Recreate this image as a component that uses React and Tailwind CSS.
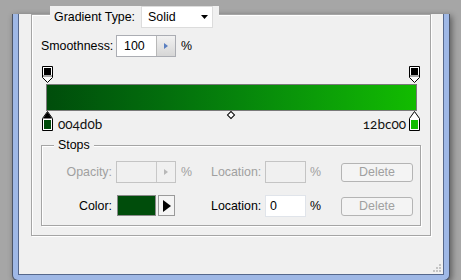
import React from 'react';

const font = "font-['Liberation_Sans',Arial,sans-serif]";

function TopStop() {
  return (
    <svg width="11" height="17" viewBox="0 0 11 17">
      <path d="M0.5 0.5H10.5V11.5L5.5 16.5L0.5 11.5Z" fill="#fff" stroke="#000" />
      <rect x="2" y="2" width="7" height="7" fill="#000" />
      <rect x="1" y="9" width="9" height="2" fill="#a8a8a8" />
    </svg>
  );
}

function BottomStop({ color, selected }) {
  return (
    <svg width="11" height="20" viewBox="0 0 11 20">
      <path d="M5.5 0.5L10.5 7.5V19.5H0.5V7.5Z" fill="#fff" stroke="#000" />
      {selected && <path d="M5.5 1L10 7.5H1Z" fill="#000" />}
      <rect x="2" y="9" width="7" height="9" fill={color} />
    </svg>
  );
}

function Spinner({ disabled }) {
  return (
    <div
      className={
        'w-[19px] h-full flex items-center justify-center border-l ' +
        (disabled
          ? 'border-[#c8c8c8] bg-[#f0f0f0]'
          : 'border-[#b8b8b8] bg-gradient-to-b from-[#f2f2f2] to-[#d6d6d6]')
      }
    >
      <svg width="4" height="6" viewBox="0 0 4 6">
        <path d="M0 0L4 3L0 6Z" fill={disabled ? '#b8b8b8' : '#5a7fc0'} />
      </svg>
    </div>
  );
}

function StopRow({ disabled, label, children, loc, pct }) {
  const txt = disabled ? 'text-[#a0a0a0]' : 'text-[#000]';
  return (
    <div className="flex items-center h-[22px]">
      <div className={'w-[70px] text-right ' + txt}>{label}</div>
      <div className="w-[60px] h-[22px] ml-[4px] flex">{children}</div>
      <div className={'w-[35px] pl-[5px] ' + txt}>{pct ? '%' : ''}</div>
      <div className={'w-[50px] ' + txt}>Location:</div>
      <div
        className={
          'w-[41px] h-[22px] ml-[4px] border px-[4px] flex items-center ' +
          (disabled ? 'border-[#c4c4c4] bg-[#f0f0f0]' : 'border-[#e0e4ea] bg-white')
        }
      >
        {loc}
      </div>
      <div className={'w-[35px] pl-[4px] ' + txt}>%</div>
      <button className="w-[72px] h-[19px] rounded-[3px] border border-[#b4b4b4] bg-[#f4f4f4] text-[#a0a0a0] leading-none">
        Delete
      </button>
    </div>
  );
}

export default function App() {
  return (
    <div className={'w-[461px] h-[280px] overflow-hidden bg-[#a6a6a6] text-[12.4px] ' + font}>
      <div className="ml-[12px] w-[438px] h-[267px] border border-t-0 border-[#4d5566] rounded-b-[6px] bg-[#9fb8e6] px-[5px] pb-[5px] shadow-[2px_2px_6px_rgba(0,0,0,0.45)]">
        <div className="relative w-full h-full border border-t-0 border-[#56688c] bg-[#f0f0f0]">
          {/* outer group box */}
          <div className="relative mt-[14px] ml-[12px] w-[400px] h-[222px] border border-[#a5a5a5] shadow-[1px_1px_0_#fff,inset_1px_1px_0_#fff]">
            <div className="absolute left-[18px] top-[-9px] flex items-center bg-[#f0f0f0] pl-[4px] pr-[6px]">
              <span className="text-[#000] w-[87px]">Gradient Type:</span>
              <div className="w-[72px] h-[22px] bg-white border border-[#dcdcdc] flex items-center justify-between pl-[6px] pr-[4px]">
                <span>Solid</span>
                <svg width="7" height="4" viewBox="0 0 7 4">
                  <path d="M0 0H7L3.5 4Z" fill="#000" />
                </svg>
              </div>
            </div>

            <div className="flex items-center mt-[20px] pl-[9px] h-[22px]">
              <span className="w-[75px]">Smoothness:</span>
              <div className="w-[60px] h-[22px] flex border border-[#abadb3] bg-white">
                <span className="flex-1 pl-[7px] leading-[20px]">100</span>
                <Spinner />
              </div>
              <span className="pl-[5px]">%</span>
            </div>

            {/* gradient editor */}
            <div className="relative mt-[9px] h-[70px]">
              <div className="absolute left-[10px] top-0"><TopStop /></div>
              <div className="absolute left-[377px] top-0"><TopStop /></div>
              <div className="absolute left-[14px] top-[18px] w-[371px] h-[27px] border border-[#7a7a7a] bg-gradient-to-r from-[#004d0b] to-[#12bc00]" />
              <div className="absolute left-[10px] top-[45px]"><BottomStop color="#004d0b" selected /></div>
              <div className="absolute left-[377px] top-[45px]"><BottomStop color="#12bc00" /></div>
              <div className="absolute left-[196px] top-[46px] w-[6px] h-[6px] rotate-45 border border-[#000] bg-white" />
              <span className="absolute left-[26px] top-[48px] font-['Lato',sans-serif] text-[13.5px] [font-variant-numeric:oldstyle-nums] text-[#111]">004d0b</span>
              <span className="absolute right-[24px] top-[48px] font-['Lato',sans-serif] text-[13.5px] [font-variant-numeric:oldstyle-nums] text-[#111]">12bc00</span>
            </div>

            {/* stops group */}
            <div className="relative mt-[9px] ml-[9px] w-[380px] h-[81px] border border-[#a5a5a5] shadow-[1px_1px_0_#fff,inset_1px_1px_0_#fff] pt-[15px]">
              <span className="absolute left-[12px] top-[-8px] bg-[#f0f0f0] px-[4px] leading-[15px]">Stops</span>
              <StopRow disabled pct label="Opacity:">
                <div className="w-full h-full flex border border-[#c4c4c4] bg-[#f0f0f0]">
                  <span className="flex-1" />
                  <Spinner disabled />
                </div>
              </StopRow>
              <div className="h-[12px]" />
              <StopRow label="Color:" loc="0">
                <div className="flex items-center gap-[2px] pl-[1px] h-[21px]">
                  <div className="w-[39px] h-[21px] bg-[#004d0b] border border-[#8a8a8a]" />
                  <div className="w-[17px] h-[21px] border border-[#9a9a9a] bg-[#f4f4f4] flex items-center justify-center">
                    <svg width="8" height="12" viewBox="0 0 8 12">
                      <path d="M0 0L8 6L0 12Z" fill="#000" />
                    </svg>
                  </div>
                </div>
              </StopRow>
            </div>
          </div>

          {/* resize grip */}
          <svg className="absolute right-[2px] bottom-[2px]" width="8" height="8" viewBox="0 0 8 8">
            <rect x="6" y="0" width="2" height="2" fill="#c4c4c4" />
            <rect x="3" y="3" width="2" height="2" fill="#c4c4c4" />
            <rect x="6" y="3" width="2" height="2" fill="#c4c4c4" />
            <rect x="0" y="6" width="2" height="2" fill="#c4c4c4" />
            <rect x="3" y="6" width="2" height="2" fill="#c4c4c4" />
            <rect x="6" y="6" width="2" height="2" fill="#c4c4c4" />
          </svg>
        </div>
      </div>
    </div>
  );
}
